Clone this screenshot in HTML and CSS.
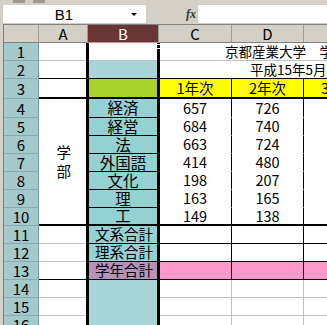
FILE: index.html
```html
<!DOCTYPE html>
<html lang="ja">
<head>
    <meta charset="UTF-8">
    <meta name="viewport" content="width=device-width, initial-scale=1.0">
    <title>学部別学生数</title>
    <link rel="stylesheet" href="styles.css">
</head>
<body>
    <div class="toolbar">
        <span class="tool-icon"></span>
        <span class="tool-icon"></span>
    </div>

    <div class="formula-bar">
        <div class="name-box">
            <span class="name">B1</span>
            <span class="drop-arrow"></span>
        </div>
        <span class="fx">fx</span>
        <div class="formula-input"></div>
    </div>

    <div class="sheet">
        <!-- column headers -->
        <div class="cell corner"></div>
        <div class="cell col-head">A</div>
        <div class="cell col-head col-head-active">B</div>
        <div class="cell col-head">C</div>
        <div class="cell col-head">D</div>
        <div class="cell col-head">E</div>

        <!-- row 1 -->
        <div class="cell row-head">1</div>
        <div class="cell"></div>
        <div class="cell"></div>
        <div class="cell title">京都産業大学　学部別学生数</div>

        <!-- row 2 -->
        <div class="cell row-head">2</div>
        <div class="cell line-bottom"></div>
        <div class="cell pick-light line-bottom"></div>
        <div class="cell subtitle line-bottom">平成15年5月1日現在</div>

        <!-- row 3 -->
        <div class="cell row-head">3</div>
        <div class="cell thick-bottom"></div>
        <div class="cell pick-lime thick-bottom"></div>
        <div class="cell yellow line-right thick-bottom">1年次</div>
        <div class="cell yellow line-right thick-bottom">2年次</div>
        <div class="cell yellow line-right thick-bottom">3年次</div>

        <!-- rows 4 - 10 -->
        <div class="cell row-head">4</div>
        <div class="cell faculty thick-bottom"><span>学部</span></div>
        <div class="cell pick line-bottom">経済</div>
        <div class="cell line-right no-bottom">657</div>
        <div class="cell line-right no-bottom">726</div>
        <div class="cell line-right no-bottom"></div>

        <div class="cell row-head">5</div>
        <div class="cell pick line-bottom">経営</div>
        <div class="cell line-right no-bottom">684</div>
        <div class="cell line-right no-bottom">740</div>
        <div class="cell line-right no-bottom"></div>

        <div class="cell row-head">6</div>
        <div class="cell pick line-bottom">法</div>
        <div class="cell line-right no-bottom">663</div>
        <div class="cell line-right no-bottom">724</div>
        <div class="cell line-right no-bottom"></div>

        <div class="cell row-head">7</div>
        <div class="cell pick line-bottom">外国語</div>
        <div class="cell line-right no-bottom">414</div>
        <div class="cell line-right no-bottom">480</div>
        <div class="cell line-right no-bottom"></div>

        <div class="cell row-head">8</div>
        <div class="cell pick line-bottom">文化</div>
        <div class="cell line-right no-bottom">198</div>
        <div class="cell line-right no-bottom">207</div>
        <div class="cell line-right no-bottom"></div>

        <div class="cell row-head">9</div>
        <div class="cell pick line-bottom">理</div>
        <div class="cell line-right no-bottom">163</div>
        <div class="cell line-right no-bottom">165</div>
        <div class="cell line-right no-bottom"></div>

        <div class="cell row-head">10</div>
        <div class="cell pick thick-bottom">工</div>
        <div class="cell line-right thick-bottom">149</div>
        <div class="cell line-right thick-bottom">138</div>
        <div class="cell line-right thick-bottom"></div>

        <!-- totals -->
        <div class="cell row-head">11</div>
        <div class="cell"></div>
        <div class="cell pick line-bottom label">文系合計</div>
        <div class="cell line-right line-bottom"></div>
        <div class="cell line-right line-bottom"></div>
        <div class="cell line-right line-bottom"></div>

        <div class="cell row-head">12</div>
        <div class="cell"></div>
        <div class="cell pick line-bottom label">理系合計</div>
        <div class="cell line-right line-bottom"></div>
        <div class="cell line-right line-bottom"></div>
        <div class="cell line-right line-bottom"></div>

        <div class="cell row-head">13</div>
        <div class="cell line-bottom"></div>
        <div class="cell pick-purple line-bottom label">学年合計</div>
        <div class="cell pink line-right line-bottom"></div>
        <div class="cell pink line-right line-bottom"></div>
        <div class="cell pink line-right line-bottom"></div>

        <!-- empty rows -->
        <div class="cell row-head">14</div>
        <div class="cell"></div>
        <div class="cell pick-light plain"></div>
        <div class="cell"></div>
        <div class="cell"></div>
        <div class="cell"></div>

        <div class="cell row-head">15</div>
        <div class="cell"></div>
        <div class="cell pick-light plain"></div>
        <div class="cell"></div>
        <div class="cell"></div>
        <div class="cell"></div>

        <div class="cell row-head">16</div>
        <div class="cell"></div>
        <div class="cell pick-light plain"></div>
        <div class="cell"></div>
        <div class="cell"></div>
        <div class="cell"></div>

        <!-- selected column outline -->
        <div class="selection">
            <span class="fill-handle"></span>
        </div>
    </div>
</body>
</html>
```

FILE: styles.css
```css
* {
    margin: 0;
    padding: 0;
    box-sizing: border-box;
}

html,
body {
    width: 327px;
    height: 325px;
    overflow: hidden;
}

body {
    font-family: "Noto Sans CJK JP", sans-serif;
    background: #d4d0c8;
    color: #000;
}

/* toolbar remains at the top */
.toolbar {
    height: 5px;
    display: flex;
    gap: 8px;
    padding-left: 13px;
}

.tool-icon {
    width: 12px;
    height: 3px;
    background: #9d9a92;
}

/* formula bar */
.formula-bar {
    height: 18px;
    margin-bottom: 1px;
    display: flex;
    align-items: stretch;
    padding-left: 3px;
}

.name-box {
    width: 143px;
    background: #fff;
    display: flex;
    align-items: center;
}

.name {
    width: 122px;
    text-align: center;
    font-family: "Liberation Sans", sans-serif;
    font-size: 15px;
    line-height: 1;
}

.drop-arrow {
    margin-left: 6px;
    width: 0;
    height: 0;
    border-left: 3px solid transparent;
    border-right: 3px solid transparent;
    border-top: 3px solid #000;
}

.fx {
    margin-left: 40px;
    width: 12px;
    font-family: "Liberation Serif", serif;
    font-style: italic;
    font-weight: bold;
    font-size: 12px;
    color: #333;
    display: flex;
    align-items: center;
}

.formula-input {
    flex: 1;
    background: #fff;
}

/* sheet grid */
.sheet {
    position: relative;
    margin-left: 3px;
    border-top: 1px solid #808080;
    border-left: 1px solid #808080;
    display: grid;
    grid-template-columns: 35px 49px 71px 73px 72px 72px;
    grid-template-rows: 18px 18px 18px 20px 19px repeat(12, 18px);
    width: 373px;
}

.cell {
    background: #fff;
    border-right: 1px solid #c0c0c0;
    border-bottom: 1px solid #c0c0c0;
    display: flex;
    align-items: center;
    justify-content: center;
    white-space: nowrap;
    font-size: 14.5px;
    line-height: 1;
}

.corner {
    background: #d4d0c8;
    border-right-color: #a09c94;
    border-bottom-color: #808080;
}

.col-head {
    background: #d4d0c8;
    border-right-color: #a09c94;
    border-bottom-color: #808080;
    font-size: 15px;
}

.col-head-active {
    background: #6a3535;
    color: #fff;
    border-bottom-color: #d98c8c;
}

.row-head {
    background: #a4c9cb;
    border-right-color: #6f9d9f;
    border-bottom-color: #86adaf;
    font-size: 15px;
}

.title {
    grid-column: span 3;
    justify-content: flex-start;
    padding-left: 66px;
    font-size: 13.5px;
}

.subtitle {
    grid-column: span 3;
    justify-content: flex-start;
    padding-left: 91px;
    font-size: 13.5px;
}

.faculty {
    grid-row: span 7;
}

.faculty span {
    writing-mode: vertical-rl;
    letter-spacing: 5px;
    padding-top: 5px;
}

/* borders */
.line-bottom {
    border-bottom: 1px solid #000;
}

.thick-bottom {
    border-bottom: 2px solid #000;
}

.line-right {
    border-right: 1px solid #000;
}

.no-bottom {
    border-bottom-color: transparent;
}

.plain {
    border-color: transparent;
}

/* fills */
.yellow {
    background: #ffff00;
}

.pink {
    background: #ff99cc;
}

.pick {
    background: #93d1d2;
    font-size: 15.5px;
}

.pick-light {
    background: #a7d6d9;
}

.pick-lime {
    background: #a9d22f;
}

.pick-purple {
    background: #b691b9;
}

.label {
    justify-content: flex-start;
    padding-left: 7px;
    font-size: 14.5px;
}

/* selection outline over column B */
.selection {
    position: absolute;
    left: 82px;
    top: 18px;
    width: 74px;
    height: 320px;
    border-left: 3px solid #000;
    border-right: 3px solid #000;
    pointer-events: none;
}

.fill-handle {
    position: absolute;
    right: -4px;
    top: 1px;
    width: 5px;
    height: 5px;
    background: #000;
    border: 1px solid #fff;
}
```
